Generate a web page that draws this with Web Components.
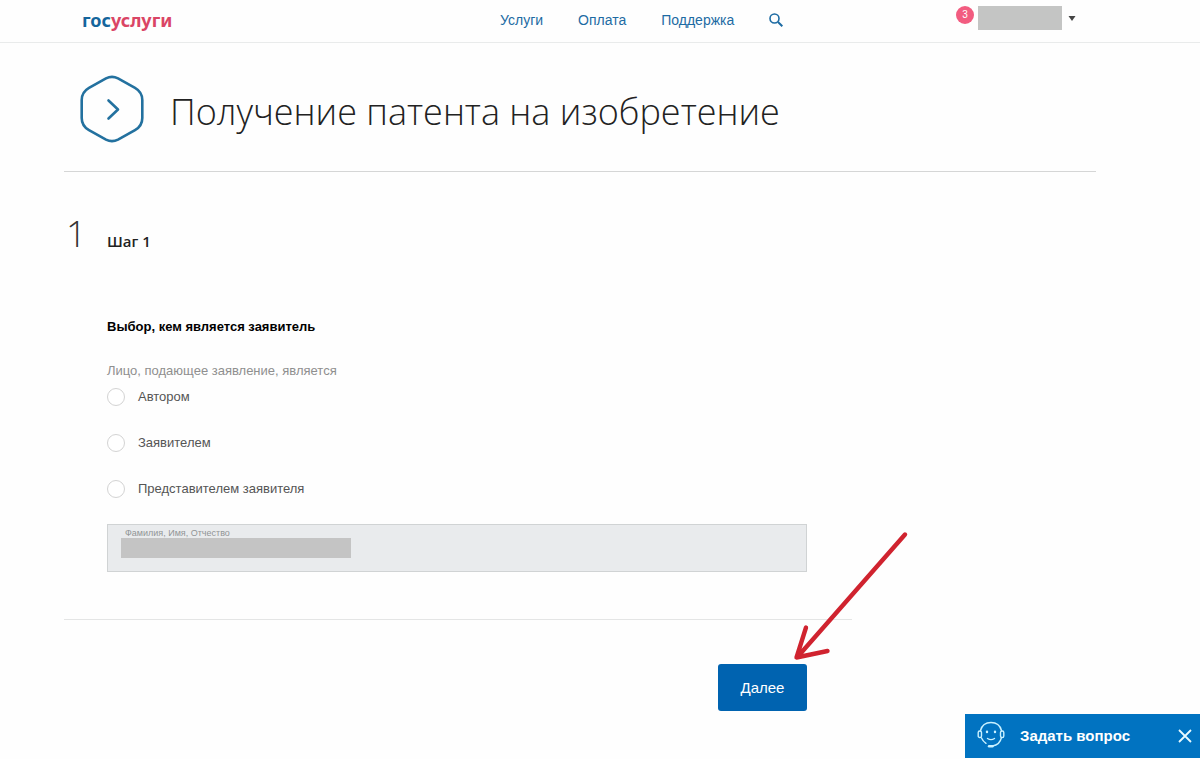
<!DOCTYPE html>
<html lang="ru">
<head>
<meta charset="utf-8">
<meta name="viewport" content="width=device-width, initial-scale=1">
<title>Получение патента на изобретение</title>
<style>
  body { margin: 0; background: #fefefe; color: #000; font-family: "Liberation Sans", Arial, sans-serif; font-size: 14px; line-height: 20px; }
</style>
</head>
<body>
<service-page></service-page>

<template id="service-page">
  <style>
    :host { display: block; }
    main { padding: 0 104px 0 64px; }
  </style>
  <site-header></site-header>
  <main>
    <service-title>Получение патента на изобретение</service-title>
    <form-step number="1" heading="Шаг 1">
      <applicant-choice></applicant-choice>
      <name-field></name-field>
      <next-button slot="action">Далее</next-button>
    </form-step>
  </main>
  <ask-widget>Задать вопрос</ask-widget>
</template>

<template id="site-header">
  <style>
    :host { display: grid; grid-template-columns: 418px 1fr auto; align-items: center; box-sizing: border-box; height: 43px; padding: 0 124px 2px 82px; border-bottom: 1px solid #e9ebeb; }
    a { text-decoration: none; color: #1d6ba3; }
    .logo { justify-self: start; font: bold 18px/24px "Noto Sans", sans-serif; color: #14659c; }
    .logo span { color: #da4565; }
    nav { display: flex; align-items: center; gap: 35px; }
    button { border: 0; padding: 0; background: none; display: flex; align-items: center; cursor: pointer; }
    .user { display: flex; align-items: flex-start; gap: 4px; padding-bottom: 4px; }
    .badge { width: 18px; height: 18px; border-radius: 50%; background: #f25c80; color: #fff; font-size: 10px; line-height: 18px; text-align: center; }
    .account { gap: 6px; }
    .name { width: 84px; height: 24px; background: #c4c5c4; }
  </style>
  <a class="logo" href="#">гос<span>услуги</span></a>
  <nav>
    <a href="#">Услуги</a>
    <a href="#">Оплата</a>
    <a href="#">Поддержка</a>
    <button aria-label="Поиск"><svg width="14" height="14" viewBox="0 0 14 14" fill="none" stroke="#1d6ba3" stroke-width="1.6"><circle cx="5.5" cy="5.5" r="4.5"/><path d="M9 9l4.3 4.3" stroke-width="2"/></svg></button>
  </nav>
  <div class="user">
    <span class="badge">3</span>
    <button class="account" aria-label="Личный кабинет"><span class="name"></span><svg width="8" height="5" viewBox="0 0 8 5"><path d="M0.5 0h7L4 5z" fill="#444"/></svg></button>
  </div>
</template>

<template id="service-title">
  <style>
    :host { display: flex; align-items: center; gap: 26px; box-sizing: border-box; height: 129px; padding: 4px 0 0 16px; border-bottom: 1px solid #d5d6d6; }
    svg { flex: none; }
    h1 { margin: 0; padding-top: 6px; font: 300 36px/48px "Open Sans", "Noto Sans", sans-serif; color: #222; }
  </style>
  <svg width="64" height="68" viewBox="0 0 64 68" fill="none" stroke="#23719f" stroke-width="2.6" stroke-linecap="round" stroke-linejoin="round"><path d="M26 3.400Q32 .3 38 3.400L55 12.800Q62.300 17 62.300 25V43Q62.300 51 55 55.200L38 64.600Q32 67.700 26 64.600L9 55.200Q1.700 51 1.700 43V25Q1.700 17 9 12.800Z"/><path d="M28.500 25.500L38 34.500L28.500 43.500"/></svg>
  <h1><slot></slot></h1>
</template>

<template id="form-step">
  <style>
    :host { display: block; max-width: 788px; }
    header { display: grid; grid-template-columns: 43px 1fr; align-items: baseline; padding-top: 38px; height: 68px; }
    .number { padding-left: 2px; font: 300 36px/48px "Open Sans", "Noto Sans", sans-serif; color: #333; }
    h2 { margin: 0; font: 600 15px/24px "Open Sans", "Noto Sans", sans-serif; color: #222; }
    .body { padding: 39px 45px 47px 43px; border-bottom: 1px solid #e4e5e5; }
    footer { display: flex; justify-content: flex-end; padding: 44px 45px 48px 43px; }
  </style>
  <header><span class="number"></span><h2></h2></header>
  <div class="body"><slot></slot></div>
  <footer><slot name="action"></slot></footer>
</template>

<template id="applicant-choice">
  <style>
    :host { display: block; }
    h3 { margin: 0 0 24px; font-size: 13px; line-height: 20px; }
    fieldset { margin: 0; padding: 0; border: 0; }
    legend { padding: 0; font-size: 13px; color: #8f8f8f; }
    .options { display: grid; gap: 26px; padding: 6px 0 25px; }
    label { display: flex; align-items: center; gap: 13px; font-size: 13px; color: #555; }
    input { appearance: none; box-sizing: border-box; width: 18px; height: 18px; margin: 0; border: 1px solid #d3d3d3; border-radius: 50%; background: #fff; }
    input:checked { border: 5px solid #0063b0; }
  </style>
  <h3>Выбор, кем является заявитель</h3>
  <fieldset>
    <legend>Лицо, подающее заявление, является</legend>
    <div class="options">
      <label><input type="radio" name="role" value="author">Автором</label>
      <label><input type="radio" name="role" value="applicant">Заявителем</label>
      <label><input type="radio" name="role" value="agent">Представителем заявителя</label>
    </div>
  </fieldset>
</template>

<template id="name-field">
  <style>
    :host { display: block; box-sizing: border-box; height: 48px; padding: 3px 13px; background: #e9ebed; border: 1px solid #d0d3d4; }
    label { display: block; padding-left: 4px; font-size: 9px; line-height: 10px; color: #919596; }
    input { display: block; box-sizing: border-box; width: 230px; height: 20px; margin: 0; padding: 0; border: 0; background: #c4c4c4; }
  </style>
  <label for="full-name">Фамилия, Имя, Отчество</label>
  <input id="full-name" type="text" readonly>
</template>

<template id="next-button">
  <style>
    :host { display: block; position: relative; }
    button { width: 89px; height: 47px; padding: 0; border: 0; border-radius: 3px; background: #0063b0; color: #fff; font: 15px/20px "Liberation Sans", Arial, sans-serif; cursor: pointer; }
    svg { position: absolute; left: 74px; bottom: 50px; pointer-events: none; }
    button, svg { display: block; }
  </style>
  <button><slot></slot></button>
  <svg width="118" height="132" viewBox="0 0 118 132" fill="none" stroke="#d0232f" stroke-width="4.400" stroke-linecap="round" stroke-linejoin="round" aria-hidden="true"><path d="M113 5.500L5 128.500M14 98.500L4.500 128.500L35.500 122"/></svg>
</template>

<template id="ask-widget">
  <style>
    :host { position: fixed; right: 0; bottom: 1px; display: flex; align-items: center; box-sizing: border-box; width: 235px; height: 44px; padding: 0 8px 0 12px; background: #0173c1; color: #fff; }
    button { display: flex; align-items: center; padding: 0; border: 0; background: none; color: inherit; cursor: pointer; }
    .ask { flex: 1; gap: 15px; font: bold 15px/20px "Liberation Sans", Arial, sans-serif; }
    .ask svg { margin-bottom: 4px; }
  </style>
  <button class="ask"><svg width="28" height="28" viewBox="0 0 28 28" fill="none" stroke="#c9f1ff" stroke-width="1.400" stroke-linecap="round"><path d="M3.500 10.500C5 5 9 2.500 14 2.500S23 5 24.500 10.500M4.500 18C5.500 20.300 7 22 9 23.300M24.500 17.500C23.500 21.800 20 25.300 15.500 26"/><rect x="1.200" y="11" width="3.300" height="6.500" rx="1.600"/><rect x="23.500" y="11" width="3.300" height="6.500" rx="1.600"/><path d="M10.500 18.500Q14 20.800 17.500 18.500"/><path d="M12 26.200H15.500" stroke-width="2.400"/><path d="M10 11.800V12M18 11.800V12" stroke-width="2.400"/></svg><span><slot></slot></span></button>
  <button aria-label="Закрыть"><svg width="14" height="14" viewBox="0 0 14 14" fill="none" stroke="#e9faff" stroke-width="1.800"><path d="M1 1l12 12M13 1L1 13"/></svg></button>
</template>

<script>
  class TemplateElement extends HTMLElement {
    constructor() {
      super();
      this.attachShadow({ mode: "open" }).append(
        document.getElementById(this.localName).content.cloneNode(true)
      );
    }
  }

  class FormStep extends TemplateElement {
    connectedCallback() {
      this.shadowRoot.querySelector(".number").textContent = this.getAttribute("number");
      this.shadowRoot.querySelector("h2").textContent = this.getAttribute("heading");
    }
  }

  customElements.define("site-header", class extends TemplateElement {});
  customElements.define("service-title", class extends TemplateElement {});
  customElements.define("form-step", FormStep);
  customElements.define("applicant-choice", class extends TemplateElement {});
  customElements.define("name-field", class extends TemplateElement {});
  customElements.define("next-button", class extends TemplateElement {});
  customElements.define("ask-widget", class extends TemplateElement {});
  customElements.define("service-page", class extends TemplateElement {});
</script>
</body>
</html>
